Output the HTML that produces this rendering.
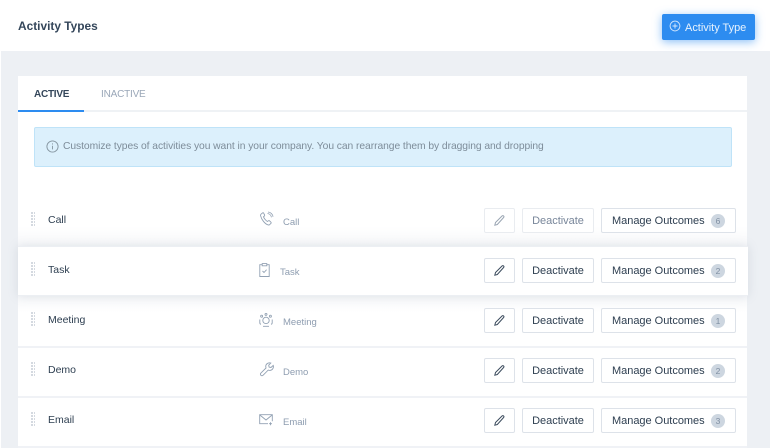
<!DOCTYPE html>
<html><head><meta charset="utf-8">
<style>
*{box-sizing:border-box}
html,body{margin:0;padding:0}
body{width:770px;height:448px;overflow:hidden;background:#fff;font-family:"Liberation Sans",sans-serif;position:relative}
#w{position:absolute;left:0;top:0;width:770px;height:448px;filter:blur(.25px)}
.a{position:absolute;white-space:nowrap}
#bg{left:1px;top:51px;width:769px;height:397px;background:#edf0f4}
#card{left:18px;top:76px;width:729px;height:372px;background:#fff}
.sep{left:18px;width:729px;height:2px;background:#f0f2f6}
.btn{position:absolute;height:25px;background:#fff;border:1px solid #dde2e9;border-radius:2px;color:#2d3e50;font-size:11px;line-height:25px;text-align:center;letter-spacing:-.02px;white-space:nowrap}
.name{left:48px;font-size:10.5px;color:#2d3e50;line-height:14px}
.type{font-size:9.5px;color:#8e9db0;line-height:14px}
.badge{position:absolute;left:109px;top:5px;width:14px;height:14px;border-radius:7px;background:#cdd6e0;color:#7f8fa2;font-size:8.5px;line-height:14px;text-align:center;letter-spacing:0}
.grip{left:31px;width:4px;height:15px;background-image:radial-gradient(circle at 1px 1px,#c5ccd5 .9px,transparent 1px);background-size:3px 3px}
svg{position:absolute;overflow:visible;fill:none}
.mo{left:601px;width:135px;text-align:left;padding-left:10px}
</style></head><body><div id="w">
<div class="a" id="bg"></div>
<div class="a" id="card"></div>

<div class="a" style="left:18px;top:18px;font-size:11.9px;font-weight:bold;color:#34465a;line-height:16px">Activity Types</div>

<div class="a" style="left:662px;top:14px;width:93px;height:26px;background:#2d8cf0;border-radius:2px;box-shadow:0 2px 9px rgba(45,140,240,.55)"></div>
<svg style="left:669px;top:20px" width="12" height="12" viewBox="0 0 12 12" stroke="#d5e8fd" stroke-width=".9"><circle cx="6" cy="6" r="4.900"/><path d="M6 3.500v5M3.500 6h5"/></svg>
<div class="a" style="left:685px;top:21px;font-size:11px;color:#e8f3fe;letter-spacing:-.02px;line-height:14px">Activity Type</div>

<div class="a" style="left:34px;top:88px;font-size:10px;font-weight:bold;color:#34465a;line-height:14px;letter-spacing:-.25px">ACTIVE</div>
<div class="a" style="left:101px;top:88px;font-size:10px;color:#9aa7b8;line-height:14px;letter-spacing:-.2px">INACTIVE</div>
<div class="a" style="left:18px;top:110px;width:729px;height:2px;background:#eff2f5"></div>
<div class="a" style="left:18px;top:110px;width:66px;height:2px;background:#2d8cf0"></div>

<div class="a" style="left:34px;top:127px;width:698px;height:40px;background:#dcf0fc;border:1px solid #bfe3f8;border-radius:2px"></div>
<svg style="left:46px;top:140px" width="13" height="13" viewBox="0 0 13 13" stroke="#84949f" stroke-width=".9"><circle cx="6.500" cy="6.500" r="5.600"/><path d="M6.500 5.800v3.600M6.500 3.400v1.100"/></svg>
<div class="a" style="left:63px;top:140px;font-size:10.3px;color:#7d8c99;line-height:14px;letter-spacing:-.06px">Customize types of activities you want in your company. You can rearrange them by dragging and dropping</div>

<div class="a" style="left:18px;top:226px;width:729px;height:20px;background:linear-gradient(#fff,#f7f8fa)"></div>
<div class="a" style="left:18px;top:296px;width:729px;height:16px;background:linear-gradient(#f7f8fa,#fff)"></div>
<div class="a sep" style="top:346px"></div>
<div class="a sep" style="top:396px"></div>
<div class="a sep" style="top:446px"></div>
<div class="a" style="left:18px;top:246px;width:730px;height:50px;background:#fff;box-shadow:0 0 10px rgba(120,135,155,.2);border-top:1px solid #eceff3;border-bottom:1px solid #eceff3"></div>

<div class="a grip" style="top:212px"></div>
<div class="a grip" style="top:262px"></div>
<div class="a grip" style="top:312px"></div>
<div class="a grip" style="top:362px"></div>
<div class="a grip" style="top:412px"></div>

<div class="a name" style="top:213px">Call</div>
<div class="a name" style="top:263px">Task</div>
<div class="a name" style="top:313px">Meeting</div>
<div class="a name" style="top:363px">Demo</div>
<div class="a name" style="top:413px">Email</div>

<svg style="left:260px;top:212px" width="14" height="15" viewBox="0 0 14 15" stroke="#92a1b3" stroke-width=".9"><path d="M1 2.200 2.600.9c.4-.3.8-.2 1 .2l1 1.900c.2.400.1.700-.2 1l-.9.800c.5 1.400 2.300 3.900 4 4.700l1-.8c.3-.2.700-.2 1 .1l1.500 1.500c.3.300.3.700 0 1l-1.300 1.300c-.5.400-1.200.5-1.900.2C4.800 11.800 1.500 7.500.6 3.800.4 3.200.6 2.600 1 2.200Z"/><path d="M7.500 1.500c2 .2 3.600 1.800 3.900 3.800M8 0c2.800.2 4.800 2.300 5 4.800" stroke-width=".8"/></svg>
<svg style="left:259px;top:263px" width="11" height="14" viewBox="0 0 11 14" stroke="#92a1b3" stroke-width=".9"><path d="M3 1.700H.8v11.800h9.400V1.700H8"/><path d="M3.200.6h4.600v2.200H3.200z"/><path d="M3.500 8l1.500 1.500 2.600-2.800"/></svg>
<svg style="left:259px;top:313px" width="14" height="14" viewBox="0 0 14 14" stroke="#92a1b3" stroke-width=".9"><circle cx="7" cy="7.400" r="3.200"/><circle cx="7" cy="1.400" r="1"/><circle cx="2.600" cy="3.200" r="1"/><circle cx="11.400" cy="3.200" r="1"/><path d="M.8 6.500v3.200c0 .8.400 1.400 1.200 1.600M13.200 6.500v3.200c0 .8-.4 1.400-1.200 1.600M4 13.300h6"/></svg>
<svg style="left:260px;top:362px" width="14" height="14" viewBox="0 0 14 14" stroke="#92a1b3" stroke-width=".9"><path d="M.8 11.200 6 6C5.400 4 6 2.200 7.700 1.300 8.900.7 10 .7 10.800 1L8.700 3.200l.4 1.900 1.900.4L13.200 3.400c.4 1 .3 2.200-.4 3.300C11.800 8.200 10 8.700 8.200 8.100L3 13.300c-.6.600-1.500.6-2.100 0-.6-.6-.7-1.500-.1-2.100Z"/></svg>
<svg style="left:259px;top:414px" width="14" height="12" viewBox="0 0 14 12" stroke="#92a1b3" stroke-width=".9"><path d="M9 9.700H.7V.7h12.600v6.500"/><path d="M.7.900 7 6l6.300-5.100"/><path d="M11.500 8.200v3M10 9.700h3"/></svg>

<div class="a type" style="left:283px;top:216px">Call</div>
<div class="a type" style="left:280px;top:266px">Task</div>
<div class="a type" style="left:283px;top:316px">Meeting</div>
<div class="a type" style="left:283px;top:366px">Demo</div>
<div class="a type" style="left:283px;top:416px">Email</div>

<div class="btn" style="left:484px;top:208px;width:31px;border-color:#e9ecf0"></div>
<div class="btn" style="left:522px;top:208px;width:72px;color:#78869a;border-color:#e9ecf0">Deactivate</div>
<div class="btn mo" style="top:208px">Manage Outcomes<span class="badge">6</span></div>
<div class="btn" style="left:484px;top:258px;width:31px"></div>
<div class="btn" style="left:522px;top:258px;width:72px">Deactivate</div>
<div class="btn mo" style="top:258px">Manage Outcomes<span class="badge">2</span></div>
<div class="btn" style="left:484px;top:308px;width:31px"></div>
<div class="btn" style="left:522px;top:308px;width:72px">Deactivate</div>
<div class="btn mo" style="top:308px">Manage Outcomes<span class="badge">1</span></div>
<div class="btn" style="left:484px;top:358px;width:31px"></div>
<div class="btn" style="left:522px;top:358px;width:72px">Deactivate</div>
<div class="btn mo" style="top:358px">Manage Outcomes<span class="badge">2</span></div>
<div class="btn" style="left:484px;top:408px;width:31px"></div>
<div class="btn" style="left:522px;top:408px;width:72px">Deactivate</div>
<div class="btn mo" style="top:408px">Manage Outcomes<span class="badge">3</span></div>

<svg style="left:494px;top:215px" width="11" height="11" viewBox="0 0 11 11" stroke="#9aa5b3" stroke-width="1"><path d="M.8 10.200 1.500 7.500 8 1c.5-.5 1.200-.5 1.600 0 .4.400.4 1.100 0 1.500L3.300 9.500Z"/></svg>
<svg style="left:494px;top:265px" width="11" height="11" viewBox="0 0 11 11" stroke="#3c4c5e" stroke-width="1"><path d="M.8 10.200 1.500 7.500 8 1c.5-.5 1.200-.5 1.600 0 .4.400.4 1.100 0 1.500L3.300 9.500Z"/></svg>
<svg style="left:494px;top:315px" width="11" height="11" viewBox="0 0 11 11" stroke="#3c4c5e" stroke-width="1"><path d="M.8 10.200 1.500 7.500 8 1c.5-.5 1.200-.5 1.600 0 .4.400.4 1.100 0 1.500L3.300 9.500Z"/></svg>
<svg style="left:494px;top:365px" width="11" height="11" viewBox="0 0 11 11" stroke="#3c4c5e" stroke-width="1"><path d="M.8 10.200 1.500 7.500 8 1c.5-.5 1.200-.5 1.600 0 .4.400.4 1.100 0 1.500L3.300 9.500Z"/></svg>
<svg style="left:494px;top:415px" width="11" height="11" viewBox="0 0 11 11" stroke="#3c4c5e" stroke-width="1"><path d="M.8 10.200 1.500 7.500 8 1c.5-.5 1.200-.5 1.600 0 .4.400.4 1.100 0 1.500L3.300 9.500Z"/></svg>
</div></body></html>
